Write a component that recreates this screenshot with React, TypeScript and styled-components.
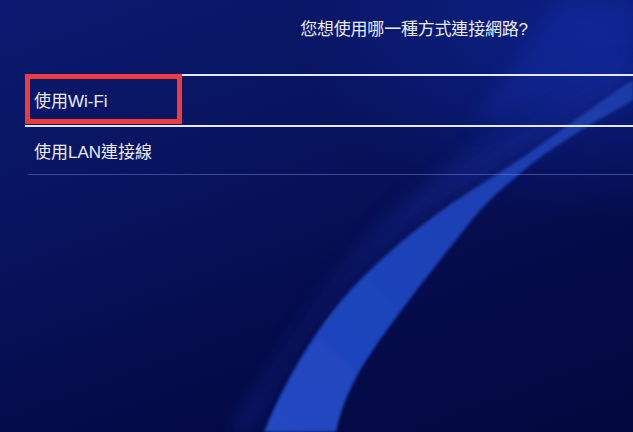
import React from "react";
import styled, { createGlobalStyle } from "styled-components";

const GlobalStyle = createGlobalStyle`
  html, body {
    margin: 0;
    padding: 0;
    background: #060f55;
  }
  #root {
    width: 633px;
    height: 432px;
  }
`;

const Screen = styled.div`
  position: relative;
  width: 633px;
  height: 432px;
  overflow: hidden;
  background:
    radial-gradient(ellipse 420px 260px at 600px 40px, rgba(16, 44, 170, 0.55), rgba(16, 44, 170, 0) 70%),
    linear-gradient(160deg, #0b1a70 0%, #08145f 35%, #050c4c 65%, #03083f 100%);
  font-family: "Liberation Sans", "Noto Sans CJK TC", "Noto Sans CJK SC", sans-serif;
  color: #e9ecf7;
`;

const Backdrop = styled.svg`
  position: absolute;
  inset: 0;
  width: 633px;
  height: 432px;
  pointer-events: none;
`;

const Content = styled.div`
  position: relative;
  display: flex;
  flex-direction: column;
`;

const Header = styled.header`
  display: flex;
  justify-content: center;
  padding: 20px 0 0 195px;
  height: 20px;
`;

const Title = styled.h1`
  margin: 0;
  font-size: 17px;
  line-height: 20px;
  font-weight: 400;
  letter-spacing: -0.2px;
  white-space: nowrap;
`;

const Menu = styled.ul`
  list-style: none;
  margin: 34px 0 0 25px;
  padding: 0;
`;

const Item = styled.li<{ $selected?: boolean }>`
  position: relative;
  display: flex;
  align-items: center;
  box-sizing: border-box;
  font-size: 17px;
  white-space: nowrap;
  height: ${(p) => (p.$selected ? "53px" : "48px")};
  border-top: ${(p) => (p.$selected ? "2px solid #e4e8f6" : "none")};
  border-bottom: ${(p) =>
    p.$selected ? "2px solid #e4e8f6" : "1px solid rgba(110, 130, 210, 0.5)"};
  margin-left: ${(p) => (p.$selected ? "0" : "3px")};
  padding-left: ${(p) => (p.$selected ? "9px" : "6px")};
  padding-bottom: ${(p) => (p.$selected ? "2px" : "0")};
`;

const Highlight = styled.span`
  position: absolute;
  left: 0;
  top: -2px;
  width: 157px;
  height: 50px;
  box-sizing: border-box;
  border: 5px solid #ef3b3f;
`;

export default function App() {
  return (
    <>
      <GlobalStyle />
      <Screen>
        <Backdrop viewBox="0 0 633 432">
          <defs>
            <linearGradient id="band" x1="0" y1="1" x2="1" y2="0">
              <stop offset="0" stopColor="#2148c2" />
              <stop offset="0.6" stopColor="#1c40b4" />
              <stop offset="1" stopColor="#1a3aa6" />
            </linearGradient>
            <filter id="soft" x="-20%" y="-20%" width="140%" height="140%">
              <feGaussianBlur stdDeviation="10" />
            </filter>
            <filter id="edge" x="-5%" y="-5%" width="110%" height="110%">
              <feGaussianBlur stdDeviation="1.6" />
            </filter>
          </defs>
          {/* faint veil beside the sweeping band */}
          <path
            d="M 250 432 C 300 330 360 250 470 190 C 520 160 580 120 633 95 L 633 60 C 560 90 480 140 420 190 C 350 250 300 330 230 432 Z"
            fill="#12299a"
            opacity="0.45"
            filter="url(#soft)"
          />
          {/* lighter diagonal in the upper right */}
          <path
            d="M 470 130 L 560 0 L 633 0 L 633 70 Z"
            fill="#1230b0"
            opacity="0.35"
            filter="url(#soft)"
          />
          {/* the sweeping band */}
          <path
            d="M 264 432 C 285 380 320 320 360 280 C 400 240 440 210 480 185 C 530 155 580 115 633 80 L 633 100 C 590 125 545 150 515 178 C 490 198 475 215 460 235 C 420 285 385 330 360 370 C 348 392 340 412 336 432 Z"
            fill="url(#band)"
            filter="url(#edge)"
          />
        </Backdrop>
        <Content>
          <Header>
            <Title>您想使用哪一種方式連接網路?</Title>
          </Header>
          <Menu>
            <Item $selected>
              <Highlight />
              使用Wi-Fi
            </Item>
            <Item>使用LAN連接線</Item>
          </Menu>
        </Content>
      </Screen>
    </>
  );
}
